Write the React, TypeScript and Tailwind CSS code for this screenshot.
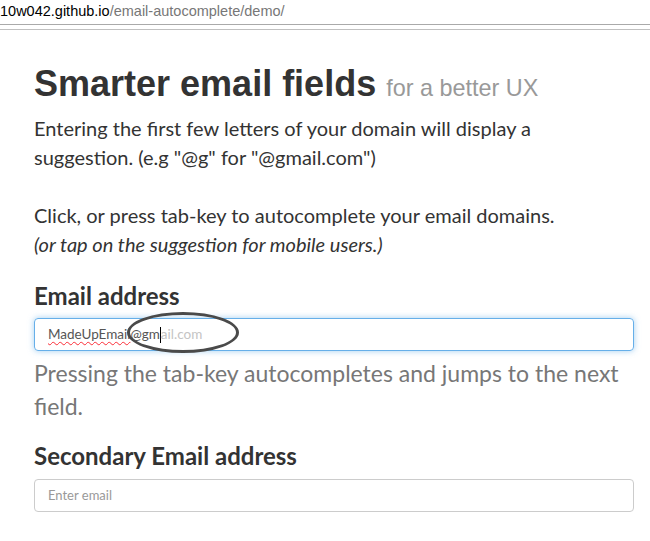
import React from 'react';

const body = { fontFamily: 'Lato, "Open Sans", sans-serif' };
const head = { fontFamily: '"Liberation Sans", Arial, sans-serif' };

export default function App() {
    return (
        <div className="w-[650px] h-[541px] bg-white overflow-hidden text-[#333]">
            {/* address bar */}
            <div className="h-[24px] pt-[2px] text-[14.5px] leading-[18px] text-black" style={head}>
                10w042.github.io<span className="text-[#777]">/email-autocomplete/demo/</span>
            </div>
            <div className="border-t border-[#aaa]" />
            <div className="h-[4px]" />
            <div className="border-t border-[#c0c0c0]" />

            <div className="ml-[34px] w-[600px]" style={body}>
                <h1 className="mt-[34px] text-[36px] leading-[40px] font-bold text-[#333]" style={head}>
                    Smarter email fields{' '}
                    <small className="text-[23.4px] font-normal text-[#999]">for a better UX</small>
                </h1>
                <p className="mt-[6px] w-[560px] text-[20px] leading-[29px]">
                    Entering the first few letters of your domain will display a suggestion. (e.g "@g" for "@gmail.com")
                    <br />
                    <br />
                    Click, or press tab-key to autocomplete your email domains.
                    <br />
                    <i>(or tap on the suggestion for mobile users.)</i>
                </p>

                <label className="block mt-[22px] text-[24px] leading-[30px] font-bold text-[#333]">Email address</label>
                <div className="relative mt-[7px]">
                    <div className="h-[33px] rounded-[4px] border border-[#66afe9] shadow-[0_0_6px_rgba(102,175,233,0.6)] px-[13px] flex items-center text-[13.5px] text-[#555]">
                        <span className="underline decoration-wavy decoration-red-500 decoration-1 underline-offset-2">MadeUpEmail</span>
                        <span>@gm</span>
                        <span className="w-px h-[16px] bg-black" />
                        <span className="text-[#c4c4c4]">ail.com</span>
                    </div>
                    {/* hand-drawn annotation ring */}
                    <div className="absolute left-[93px] top-[-6px] w-[112px] h-[41px] rounded-[50%] border-[3px] border-[#4a4a4a]" />
                </div>
                <p className="mt-[6px] text-[23px] leading-[33px] text-[#777]">
                    Pressing the tab-key autocompletes and jumps to the next field.
                </p>

                <label className="block mt-[18px] text-[24px] leading-[30px] font-bold text-[#333]">Secondary Email address</label>
                <div className="mt-[8px] h-[33px] rounded-[4px] border border-[#ccc] px-[13px] flex items-center text-[13px] text-[#999]">
                    Enter email
                </div>
            </div>
        </div>
    );
}
